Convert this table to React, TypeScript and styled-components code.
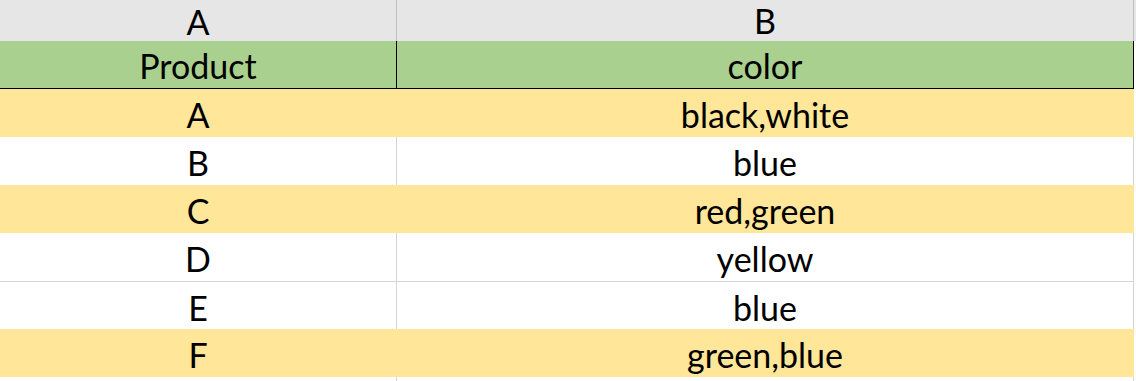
import styled, { createGlobalStyle } from 'styled-components';

// rows of the sheet; fill marks the yellow highlighted ones
const rows = [
    { product: 'A', color: 'black,white', fill: true },
    { product: 'B', color: 'blue', fill: false },
    { product: 'C', color: 'red,green', fill: true },
    { product: 'D', color: 'yellow', fill: false },
    { product: 'E', color: 'blue', fill: false },
    { product: 'F', color: 'green,blue', fill: true },
];

const GlobalStyle = createGlobalStyle`
    html, body {
        margin: 0;
        padding: 0;
        background: #ffffff;
    }
    body {
        font-family: Lato, 'Open Sans', sans-serif;
        color: #000000;
    }
`;

const App = () => {
    return (
        <>
            <GlobalStyle />
            <Sheet>
                <HeaderRow>
                    <ColHead>A</ColHead>
                    <ColHead $selected>B</ColHead>
                </HeaderRow>
                <TitleRow>
                    <TitleCell>Product</TitleCell>
                    <TitleCell>color</TitleCell>
                </TitleRow>
                {rows.map((row, i) => {
                    const prev = rows[i - 1];
                    // gridline only shows between two unfilled rows
                    const lined = !row.fill && !!prev && !prev.fill;
                    return (
                        <Row key={row.product} $fill={row.fill} $lined={lined}>
                            <Cell $fill={row.fill}>{row.product}</Cell>
                            <Cell $fill={row.fill}>{row.color}</Cell>
                        </Row>
                    );
                })}
                <Row $fill={false} $lined={false} $tail>
                    <Cell $fill={false} />
                    <Cell $fill={false} />
                </Row>
            </Sheet>
        </>
    );
};

const Sheet = styled.div`
    width: 1136px;
    height: 381px;
    overflow: hidden;
    display: flex;
    flex-direction: column;
    & > * {
        flex-shrink: 0;
    }
`;

const HeaderRow = styled.div`
    display: grid;
    grid-template-columns: 397px 737px;
    height: 41px;
    background: #e6e6e6;
`;

const ColHead = styled.div<{ $selected?: boolean }>`
    display: flex;
    align-items: center;
    justify-content: center;
    box-sizing: border-box;
    font-size: 34px;
    padding-bottom: 3px;
    border-right: 1px solid #bdbdbd;
    border-bottom: ${(p) =>
        p.$selected ? '2px solid #217346' : '1px solid #a6a6a6'};
`;

const TitleRow = styled.div`
    display: grid;
    grid-template-columns: 397px 737px;
    height: 48px;
    width: 1134px;
    box-sizing: border-box;
    background: #a9d08e;
    border-bottom: 1px solid #000000;
`;

const TitleCell = styled.div`
    display: flex;
    align-items: center;
    justify-content: center;
    padding-top: 2px;
    font-size: 34px;
    box-sizing: border-box;
    border-right: 1px solid #000000;
`;

const Row = styled.div<{ $fill: boolean; $lined: boolean; $tail?: boolean }>`
    display: grid;
    grid-template-columns: 397px 737px;
    height: ${(p) => (p.$tail ? '8px' : '48px')};
    width: 1134px;
    box-sizing: border-box;
    background: ${(p) => (p.$fill ? '#ffe699' : '#ffffff')};
    border-top: ${(p) => (p.$lined ? '1px solid #d4d4d4' : 'none')};
`;

const Cell = styled.div<{ $fill: boolean }>`
    display: flex;
    align-items: center;
    justify-content: center;
    padding-top: 3px;
    font-size: 34px;
    box-sizing: border-box;
    border-right: 1px solid ${(p) => (p.$fill ? 'transparent' : '#d4d4d4')};
`;

export default App;
